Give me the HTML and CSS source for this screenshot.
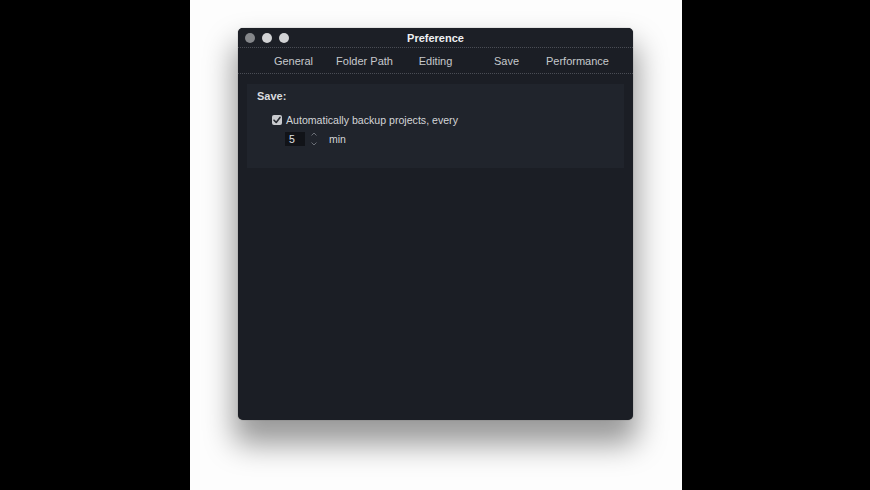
FILE: index.html
```html
<!DOCTYPE html>
<html>
<head>
<meta charset="utf-8">
<link rel="stylesheet" href="styles.css">
</head>
<body>
<div class="stage">
  <div class="window">
    <div class="titlebar">
      <div class="lights">
        <span class="light light-close"></span>
        <span class="light"></span>
        <span class="light"></span>
      </div>
      <div class="title">Preference</div>
    </div>
    <div class="tabs">
      <div class="tab">General</div>
      <div class="tab">Folder Path</div>
      <div class="tab">Editing</div>
      <div class="tab">Save</div>
      <div class="tab">Performance</div>
    </div>
    <div class="panel">
      <div class="section-title">Save:</div>
      <label class="check-row">
        <span class="checkbox">
          <svg width="10" height="10" viewBox="0 0 10 10"><path d="M2 5.2 L4.2 7.4 L8 2.4" fill="none" stroke="#2a2d33" stroke-width="1.6" stroke-linecap="round" stroke-linejoin="round"/></svg>
        </span>
        <span class="check-label">Automatically backup projects, every</span>
      </label>
      <div class="num-row">
        <span class="num-input">5</span>
        <span class="stepper">
          <svg width="8" height="16" viewBox="0 0 8 16"><path d="M1.5 4.5 L4 2 L6.5 4.5" fill="none" stroke="#6a6e76" stroke-width="1"/><path d="M1.5 11.5 L4 14 L6.5 11.5" fill="none" stroke="#6a6e76" stroke-width="1"/></svg>
        </span>
        <span class="unit">min</span>
      </div>
    </div>
  </div>
</div>
</body>
</html>
```

FILE: styles.css
```css
html, body {
  margin: 0;
  padding: 0;
  background: #000;
  height: 100%;
}
body {
  display: flex;
  justify-content: center;
  font-family: "Liberation Sans", Arial, sans-serif;
}
.stage {
  width: 492px;
  height: 490px;
  background: #fdfdfd;
  padding-top: 28px;
  box-sizing: border-box;
  margin-left: 1px;
}
.window {
  width: 395px;
  height: 392px;
  margin: 0 auto;
  background: #1b1e25;
  border-radius: 5px;
  box-shadow: 0 20px 30px 4px rgba(0, 0, 0, 0.4), 0 0 1px rgba(0,0,0,0.6);
  overflow: hidden;
}
.titlebar {
  position: relative;
  height: 19px;
  border-bottom: 1px dotted #4a4d55;
  display: flex;
  align-items: center;
  background: #1c1f26;
}
.lights {
  display: flex;
  gap: 7px;
  padding-left: 7px;
  padding-top: 1px;
}
.light {
  width: 10px;
  height: 10px;
  border-radius: 50%;
  background: #d2d3d5;
}
.light-close {
  background: #85878b;
}
.title {
  position: absolute;
  left: 0;
  right: 0;
  top: 1px;
  height: 19px;
  line-height: 19px;
  text-align: center;
  color: #eef0f2;
  font-weight: bold;
  font-size: 11px;
  pointer-events: none;
}
.tabs {
  height: 25px;
  display: grid;
  grid-template-columns: repeat(5, 71px);
  justify-content: center;
  align-items: center;
  border-bottom: 1px dotted #4a4d55;
}
.tab {
  text-align: center;
  color: #c6c8cc;
  font-size: 11px;
}
.panel {
  margin: 10px 9px 0;
  height: 84px;
  background: #20242c;
  padding: 6px 0 0 10px;
  box-sizing: border-box;
}
.section-title {
  color: #d9dbde;
  font-weight: bold;
  font-size: 11px;
  line-height: 13px;
}
.check-row {
  display: flex;
  align-items: center;
  gap: 4px;
  margin-top: 11px;
  margin-left: 15px;
}
.checkbox {
  width: 10px;
  height: 10px;
  background: #c9cbcf;
  border-radius: 2px;
  display: flex;
  align-items: center;
  justify-content: center;
}
.check-label {
  color: #d3d5d8;
  font-size: 10.6px;
  line-height: 12px;
}
.num-row {
  display: flex;
  align-items: center;
  margin-top: 5px;
  margin-left: 28px;
}
.num-input {
  width: 20px;
  height: 14px;
  background: #111318;
  color: #e0e2e5;
  font-size: 10.5px;
  line-height: 14px;
  padding-left: 4px;
  box-sizing: border-box;
}
.stepper {
  display: flex;
  margin-left: 5px;
}
.unit {
  color: #d3d5d8;
  font-size: 10.5px;
  margin-left: 11px;
}
```
